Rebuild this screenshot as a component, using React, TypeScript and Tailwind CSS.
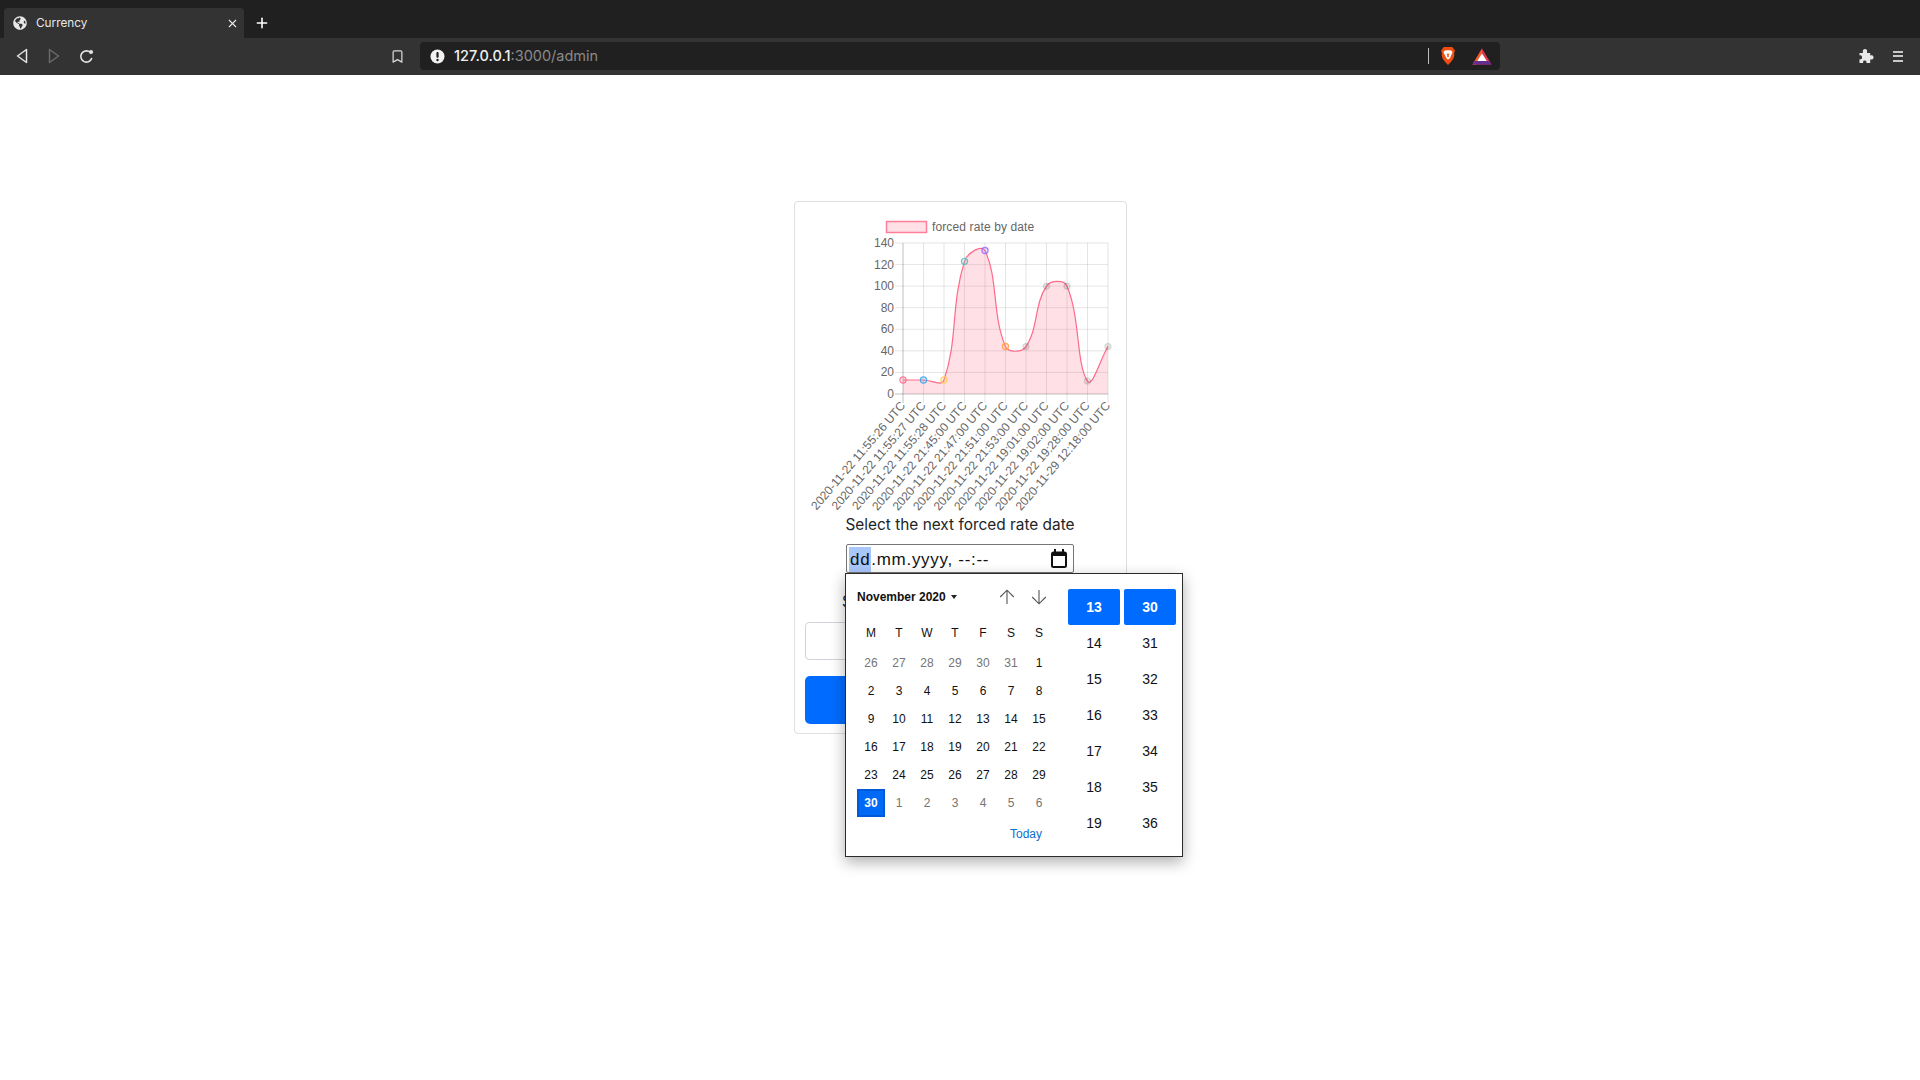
import { Bookmark, Plus, X } from "lucide-react";
import { FaGlobeAmericas } from "react-icons/fa";

const labels = [
  "2020-11-22 11:55:26 UTC",
  "2020-11-22 11:55:27 UTC",
  "2020-11-22 11:55:28 UTC",
  "2020-11-22 21:45:00 UTC",
  "2020-11-22 21:47:00 UTC",
  "2020-11-22 21:51:00 UTC",
  "2020-11-22 21:53:00 UTC",
  "2020-11-22 19:01:00 UTC",
  "2020-11-22 19:02:00 UTC",
  "2020-11-22 19:28:00 UTC",
  "2020-11-29 12:18:00 UTC",
];
const values = [13, 13, 13, 123, 133, 44, 44, 100, 100, 12, 44];
const pointColors = [
  ["rgba(255,99,132,0.8)", "rgba(255,99,132,0.2)"],
  ["rgba(54,162,235,0.85)", "rgba(54,162,235,0.2)"],
  ["rgba(255,206,86,0.85)", "rgba(255,206,86,0.2)"],
  ["rgba(75,192,192,0.85)", "rgba(75,192,192,0.2)"],
  ["rgba(153,102,255,0.85)", "rgba(153,102,255,0.2)"],
  ["rgba(255,159,64,0.85)", "rgba(255,159,64,0.2)"],
  ["rgba(0,0,0,0.1)", "rgba(0,0,0,0.1)"],
  ["rgba(0,0,0,0.1)", "rgba(0,0,0,0.1)"],
  ["rgba(0,0,0,0.1)", "rgba(0,0,0,0.1)"],
  ["rgba(0,0,0,0.1)", "rgba(0,0,0,0.1)"],
  ["rgba(0,0,0,0.1)", "rgba(0,0,0,0.1)"],
];

// plot area, relative to the svg's top left corner
const left = 98;
const right = 303;
const top = 31;
const bottom = 182;
const xAt = (i: number) => left + (i * (right - left)) / 10;
const yAt = (v: number) => bottom - (v * (bottom - top)) / 140;

// same spline as chart.js with tension 0.4
function linePath() {
  const pts = values.map((v, i) => ({ x: xAt(i), y: yAt(v) }));
  const cps = pts.map((p, i) => {
    const prev = pts[i - 1] ?? p;
    const next = pts[i + 1] ?? p;
    const d1 = Math.hypot(p.x - prev.x, p.y - prev.y);
    const d2 = Math.hypot(next.x - p.x, next.y - p.y);
    const s1 = d1 + d2 === 0 ? 0 : d1 / (d1 + d2);
    const s2 = d1 + d2 === 0 ? 0 : d2 / (d1 + d2);
    return {
      px: p.x - 0.4 * s1 * (next.x - prev.x),
      py: p.y - 0.4 * s1 * (next.y - prev.y),
      nx: p.x + 0.4 * s2 * (next.x - prev.x),
      ny: p.y + 0.4 * s2 * (next.y - prev.y),
    };
  });
  let d = `M${pts[0].x} ${pts[0].y}`;
  for (let i = 1; i < pts.length; i++) {
    d += ` C${cps[i - 1].nx} ${cps[i - 1].ny} ${cps[i].px} ${cps[i].py} ${pts[i].x} ${pts[i].y}`;
  }
  return d;
}

const RateChart = () => {
  const line = linePath();
  return (
    <svg width="310" height="301" className="block overflow-visible" style={{ fontFamily: "'Liberation Sans', Arial, sans-serif" }}>
      <rect x="81.5" y="9.5" width="40" height="11" fill="rgba(255,99,132,0.2)" stroke="rgba(255,99,132,0.8)" strokeWidth="1.5" />
      <text x="127" y="19" fontSize="12" letterSpacing="0.12" fill="#666">forced rate by date</text>

      {[0, 20, 40, 60, 80, 100, 120, 140].map((v) => (
        <g key={v}>
          <line x1={left - 8} x2={right} y1={yAt(v)} y2={yAt(v)} stroke={v === 0 ? "rgba(0,0,0,0.25)" : "rgba(0,0,0,0.1)"} />
          <text x={left - 9} y={yAt(v) + 4} fontSize="12" fill="#666" textAnchor="end">{v}</text>
        </g>
      ))}
      {values.map((_, i) => (
        <line key={i} x1={xAt(i)} x2={xAt(i)} y1={top} y2={bottom + 9} stroke={i === 0 ? "rgba(0,0,0,0.25)" : "rgba(0,0,0,0.1)"} />
      ))}

      <path d={`${line} L${right} ${bottom} L${left} ${bottom} Z`} fill="rgba(255,99,132,0.2)" />
      <path d={line} fill="none" stroke="rgba(255,99,132,0.95)" strokeWidth="1.2" />
      {values.map((v, i) => (
        <circle key={i} cx={xAt(i)} cy={yAt(v)} r="3.1" fill={pointColors[i][1]} stroke={pointColors[i][0]} strokeWidth="1.2" />
      ))}

      {labels.map((label, i) => (
        <text
          key={label}
          fontSize="12"
          fill="#666"
          textAnchor="end"
          transform={`translate(${xAt(i) + 3} ${bottom + 12}) rotate(-49.5)`}
        >
          {label}
        </text>
      ))}
    </svg>
  );
};

const BackIcon = ({ dim }: { dim?: boolean }) => (
  <svg width="12" height="16" viewBox="0 0 12 16" fill="none" stroke={dim ? "#6a6a6a" : "#e4e4e4"} strokeWidth="1.5" strokeLinejoin="round" className={dim ? "rotate-180" : ""}>
    <path d="M10.5 1.5v13L1.5 8z" />
  </svg>
);

const ReloadIcon = () => (
  <svg width="15" height="15" viewBox="0 0 15 15" fill="none" className="ml-[19px]">
    <path d="M12.6 9.6A5.6 5.6 0 1 1 9.8 2.4" stroke="#e4e4e4" strokeWidth="1.6" strokeLinecap="round" />
    <circle cx="12" cy="3" r="2.1" fill="#e4e4e4" />
  </svg>
);

const AlertIcon = () => (
  <svg width="15" height="15" viewBox="0 0 15 15">
    <circle cx="7.5" cy="7.5" r="7" fill="#f2f2f2" />
    <rect x="6.4" y="3" width="2.2" height="5.8" rx="1" fill="#202020" />
    <circle cx="7.5" cy="11" r="1.2" fill="#202020" />
  </svg>
);

const BraveIcon = () => (
  <svg width="16" height="20" viewBox="0 0 16 22">
    <path d="M3.4 1h9.2l1.1 1.6L15.6 5l-.4 2-.5 1.2.3 2-1 3.6-2.6 3.6L8 20.8l-3.4-3.4L2 13.8 1 10.2l.3-2L.8 7 .4 5l1.9-2.4z" fill="#f04d12" />
    <path d="M3.6 5.6l2.6-.8h3.6l2.6.8.4 2.2-1.6 2.8-.9 2.5L8.9 14.6H7.1l-1.2-2-.9-2L3.2 7.8z" fill="#fff" />
    <path d="M6.2 8.2l1 1.8v2.4h1.6V10l1-1.8-1.4.4h-.8z" fill="#f04d12" />
  </svg>
);

const BatIcon = () => (
  <svg width="20" height="17" viewBox="0 0 20 17">
    <path d="M10 .5L.5 16.5h19z" fill="#e0354c" />
    <path d="M10 .5L.5 16.5h4L10 6z" fill="#f15a29" />
    <path d="M.5 16.5l2.2-3.6h14.6l2.2 3.6z" fill="#662d91" />
    <path d="M10 5.5L5.2 12.9h9.6z" fill="#fff" />
  </svg>
);

const PuzzleIcon = () => (
  <svg width="16" height="16" viewBox="0 0 16 16" fill="#e8e8e8" className="ml-auto">
    <path d="M1.5 5h3.6C4.6 3.9 4.5 1 7 1s2.4 2.9 1.9 4h3.3v2.6c1-.5 3.3-.5 3.3 1.8s-2.3 2.3-3.3 1.8V15H8.3c.4-1 .4-2.6-1.6-2.6S4.9 14 5.3 15H1.5v-3.8c1 .4 2.5.2 2.5-1.8S2.5 7.1 1.5 7.5z" />
  </svg>
);

const CalendarIcon = () => (
  <svg width="16" height="19" viewBox="0 0 16 19" fill="none" stroke="#111">
    <rect x="1" y="3.5" width="14" height="14.5" rx="1.5" strokeWidth="2" />
    <path d="M1 5.5h14" strokeWidth="3" />
    <path d="M4 0v3M12 0v3" strokeWidth="2" />
  </svg>
);

const ArrowUp = ({ flip }: { flip?: boolean }) => (
  <svg width="16" height="16" viewBox="0 0 16 16" fill="none" stroke="#555" strokeWidth="1.1" className={flip ? "rotate-180" : ""}>
    <path d="M8 15V1.2M1.2 8L8 1.2 14.8 8" />
  </svg>
);

const BrowserChrome = () => (
  <div className="shrink-0 font-['Inter',sans-serif]">
    <div className="flex h-[38px] items-end bg-[#202020] pl-1">
      <div className="flex h-[30px] w-[240px] items-center rounded-t-[4px] bg-[#333333] pl-[9px] pr-[5px] text-[11.8px] text-[#e8e8e8]">
        <FaGlobeAmericas className="mr-[9px] h-[14px] w-[14px] text-[#e8e8e8]" />
        <span className="pt-px">Currency</span>
        <X className="ml-auto h-[13px] w-[13px]" strokeWidth={2} />
      </div>
      <Plus className="mb-[7px] ml-[10px] h-4 w-4 text-white" strokeWidth={2.4} />
    </div>
    <div className="flex h-[37px] items-center bg-[#333333] pb-[1px]">
      <div className="flex w-[107px] items-center pl-4">
        <BackIcon />
        <div className="ml-5"><BackIcon dim /></div>
        <ReloadIcon />
      </div>
      <Bookmark className="ml-[283px] h-[15px] w-[15px] text-[#d8d8d8]" strokeWidth={2} />
      <div className="ml-[15px] flex h-7 w-[1080px] items-center rounded-[4px] bg-[#202020] pl-[10px] pr-[8px]">
        <AlertIcon />
        <span className="ml-[9px] text-[14.5px] font-medium text-[#f0f0f0]">127.0.0.1<span className="font-normal text-[#8a8a8a]">:3000/admin</span></span>
        <div className="ml-auto mr-[11px] h-4 w-px bg-[#bdbdbd]" />
        <BraveIcon />
        <div className="ml-4"><BatIcon /></div>
      </div>
      <PuzzleIcon />
      <div className="ml-[19px] mr-[17px] flex h-[11px] w-[10px] flex-col justify-between">
        <div className="h-[2px] bg-[#c8c8c8]" />
        <div className="h-[2px] bg-[#c8c8c8]" />
        <div className="h-[2px] bg-[#c8c8c8]" />
      </div>
    </div>
  </div>
);

const days = [26, 27, 28, 29, 30, 31, 1, 2, 3, 4, 5, 6, 7, 8, 9, 10, 11, 12, 13, 14, 15, 16, 17, 18, 19, 20, 21, 22, 23, 24, 25, 26, 27, 28, 29, 30, 1, 2, 3, 4, 5, 6];
const hours = [13, 14, 15, 16, 17, 18, 19];
const minutes = [30, 31, 32, 33, 34, 35, 36];

const DatePopup = () => (
  <div className="absolute left-[-2px] top-[28px] z-10 flex h-[284px] w-[338px] border border-[#2b2b2b] bg-white font-['Liberation_Sans',Arial,sans-serif] tracking-normal shadow-[0_5px_14px_rgba(0,0,0,0.32)]">
    <div className="w-[222px] pl-[11px] pt-[9px]">
      <div className="mb-2 flex h-7 w-[196px] items-center pr-[6px]">
        <span className="text-[12px] font-bold text-[#111]">November 2020</span>
        <div className="ml-[5px] h-0 w-0 border-x-[3.5px] border-t-[4px] border-x-transparent border-t-[#222]" />
        <div className="ml-auto flex gap-4">
          <ArrowUp />
          <ArrowUp flip />
        </div>
      </div>
      <div className="mb-[2px] grid w-[196px] grid-cols-7 text-center text-[12px] leading-7 text-[#111]">
        {["M", "T", "W", "T", "F", "S", "S"].map((d, i) => (
          <div key={i} className="h-7">{d}</div>
        ))}
      </div>
      <div className="grid w-[196px] grid-cols-7 text-center text-[12px] leading-7 text-[#111]">
        {days.map((d, i) => {
          const muted = i < 6 || i > 35;
          return (
            <div
              key={i}
              className={
                i === 35
                  ? "h-7 border-2 border-[#0059d6] bg-[#0069f5] font-bold leading-6 text-white"
                  : muted
                    ? "h-7 text-[#757575]"
                    : "h-7"
              }
            >
              {d}
            </div>
          );
        })}
      </div>
      <div className="mt-2 w-[185px] text-right text-[12px] text-[#0a6fd0]">Today</div>
    </div>
    <div className="pt-[15px]">
      <div className="grid w-[108px] grid-cols-2 gap-x-1 text-center text-[14px] leading-9 text-[#111]">
        {hours.map((h, i) => (
          <div key={h} className="contents">
            <div className={i === 0 ? "h-9 rounded-[2px] bg-[#006cff] font-bold text-white" : "h-9"}>{h}</div>
            <div className={i === 0 ? "h-9 rounded-[2px] bg-[#006cff] font-bold text-white" : "h-9"}>{minutes[i]}</div>
          </div>
        ))}
      </div>
    </div>
  </div>
);

export default function App() {
  return (
    <div className="flex min-h-screen flex-col bg-white">
      <BrowserChrome />
      <main className="flex justify-center pt-[126px]">
        <div className="h-[533px] w-[333px] rounded-[4px] border border-[#dfdfdf] bg-white p-[10px] text-center font-['Inter',sans-serif] text-[#212529]">
          <RateChart />
          <label className="block h-6 text-[15.4px] leading-6">Select the next forced rate date</label>
          <div className="relative mx-auto mt-[7px] h-[29px] w-[228px] rounded-[2px] border border-[#767676] text-left font-['Liberation_Sans',Arial,sans-serif]">
            <div className="flex h-full items-center pl-[2px] pr-[6px] pt-[2px] text-[17px] tracking-[0.7px] text-[#111]">
              <span className="bg-[#a8c7fa] px-px">dd</span>
              <span>.mm.yyyy, --:--</span>
              <div className="ml-auto -mt-[2px]"><CalendarIcon /></div>
            </div>
            <DatePopup />
          </div>
          <label className="mt-[17px] block h-6 text-[15.4px] leading-6">Select the next forced rate value</label>
          <input className="mt-2 block h-[38px] w-full rounded-[4px] border border-[#ced4da]" />
          <button className="mt-4 block h-12 w-full rounded-[5px] bg-[#006cff] text-[20px] text-white">Submit</button>
        </div>
      </main>
    </div>
  );
}
